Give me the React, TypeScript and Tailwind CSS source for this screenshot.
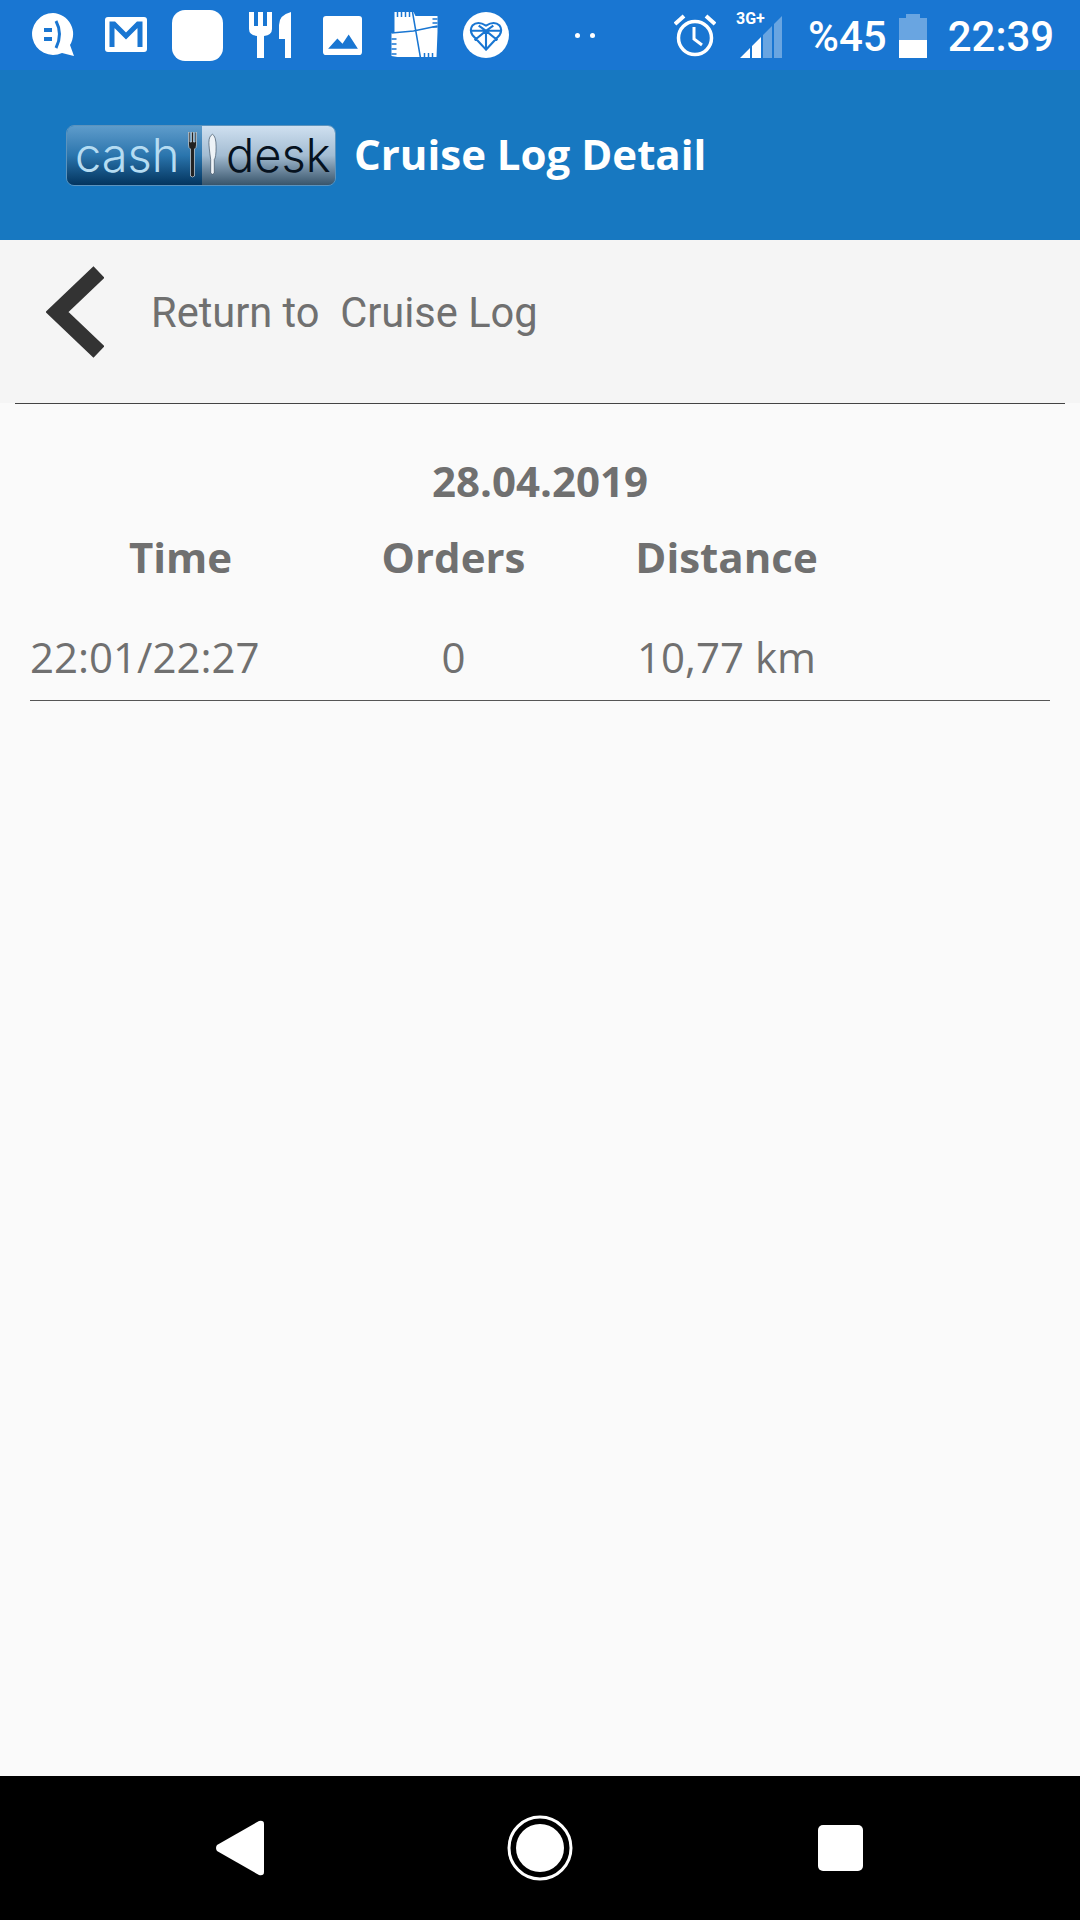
const Bubble = () => (
  <svg width="44" height="46" viewBox="0 0 44 46" className="ml-[32px]">
    <path d="M21 1a21 21 0 1 0 9 40l12 3-4-11A21 21 0 0 0 21 1z" fill="#fff" />
    <rect x="12" y="16" width="8" height="4" fill="#1976d2" />
    <rect x="12" y="25" width="8" height="4" fill="#1976d2" />
    <path d="M24 9q7 13 0 27" fill="none" stroke="#1976d2" strokeWidth="3" />
  </svg>
);

const Gmail = () => (
  <svg width="42" height="36" viewBox="0 0 42 36" className="ml-[29px]">
    <rect width="42" height="35" rx="3" fill="#fff" />
    <path d="M7 30V7h2l12 12L33 7h2v23" fill="none" stroke="#1976d2" strokeWidth="5" />
  </svg>
);

const Cutlery = () => (
  <svg width="42" height="48" viewBox="0 0 42 48" className="ml-[26px]">
    <path d="M0 1h5v14h4V1h5v14h4V1h5v17q0 6-8 7v22H8V25q-8-1-8-7z" fill="#fff" />
    <path d="M42 1v46h-6V28h-6V14Q30 4 42 1z" fill="#fff" />
  </svg>
);

const Picture = () => (
  <svg width="39" height="39" viewBox="0 0 38 38" className="ml-[32px]">
    <rect width="38" height="38" rx="3" fill="#fff" />
    <path d="M5 32l9-10 5 5 6-9 9 14z" fill="#1976d2" />
  </svg>
);

const Blanket = () => (
  <svg width="47" height="48" viewBox="0 0 46 48" className="ml-[29px]">
    <path d="M3 1h19l2 4h22v16l-1 25H6l-6-1V22h3z" fill="#fff" />
    <path d="M21 1l8 46M0 22l22-2 24-5" fill="none" stroke="#1976d2" strokeWidth="1.5" />
    <path d="M6 1v5M10 1v5M14 1v5M18 1v5M41 8h5M41 12h5M41 16h5M0 28h5M0 33h5M0 38h5M0 43h5M33 42v5M37 42v5M41 42v5" stroke="#1976d2" strokeWidth="1.5" />
  </svg>
);

const HeartCircle = () => (
  <svg width="46" height="46" viewBox="0 0 44 44" className="ml-[25px]">
    <circle cx="22" cy="22" r="22" fill="#fff" />
    <path d="M22 36L9 22q-3-5 0-9 5-5 13 0 8-5 13 0 3 4 0 9zM7 18h30M22 36V18M15 13l7 5 7-5M11 27l11-9 11 9" fill="none" stroke="#1976d2" strokeWidth="2" />
  </svg>
);

const Alarm = () => (
  <svg width="42" height="44" viewBox="0 0 42 44" className="ml-[79px] mt-[2px]">
    <circle cx="21" cy="24" r="16.5" fill="none" stroke="#fff" strokeWidth="3.5" />
    <path d="M20 13v12l8 6" fill="none" stroke="#fff" strokeWidth="3" />
    <path d="M1 10L10 2M41 10L32 2" stroke="#fff" strokeWidth="4" />
  </svg>
);

const Signal = () => (
  <div className="relative ml-[24px] mt-[2px] h-[44px] w-[42px]">
    <svg width="42" height="44" viewBox="0 0 42 44" className="absolute left-0 top-0">
      <path d="M0 44l10-10v10zM12 44V32l9-9v21z" fill="#fff" />
      <path d="M23 44V21l9-9v32zM34 44V10l8-8v42z" fill="#fff" fillOpacity="0.35" />
    </svg>
    <span className="absolute left-[-4px] top-[-4px] font-['Roboto',sans-serif] text-[16px] leading-[18px] font-bold text-white">
      3G+
    </span>
  </div>
);

const Battery = () => (
  <div className="ml-[12px] mt-[1px] flex h-[44px] w-[28px] flex-col items-center">
    <div className="h-[4px] w-[14px] bg-white/35" />
    <div className="h-[22px] w-[28px] bg-white/35" />
    <div className="h-[18px] w-[28px] bg-white" />
  </div>
);

const Logo = () => (
  <div className="flex h-[61px] w-[270px] overflow-hidden rounded-[8px] border border-[#5c93bd]">
    <div className="flex w-[135px] items-center justify-between bg-gradient-to-b from-[#5e9ccb] via-[#2a75ad] to-[#04355f] pl-[8px] pr-[4px]">
      <span className="font-['Inter',sans-serif] text-[47px] leading-[44px] font-light text-[#b5dcf2]">cash</span>
      <svg width="11" height="46" viewBox="0 0 10 46" className="shrink-0">
        <path d="M1 0h1.5v10H4V0h2v10h1.500V0H9v13q0 3-2 4v27q-2 2-4 0V17q-2-1-2-4z" fill="#222" stroke="#cfd8df" strokeWidth="0.7" />
      </svg>
    </div>
    <div className="flex flex-1 items-center bg-gradient-to-b from-[#cfe0f0] via-[#a3bcd2] to-[#39556b] pl-[6px]">
      <svg width="9" height="46" viewBox="0 0 10 46" className="mr-[9px] shrink-0">
        <path d="M5 0q4 2 4 14t-2 14v15q-2 3-4 0V28Q1 14 1 9q0-7 4-9z" fill="#eef3f7" stroke="#33465a" strokeWidth="0.7" />
      </svg>
      <span className="font-['Inter',sans-serif] text-[47px] leading-[44px] font-light text-[#06121f]">desk</span>
    </div>
  </div>
);

const App = () => {
  return (
    <div className="flex h-[1920px] w-[1080px] flex-col bg-[#fafafa]">
      {/* status bar */}
      <div className="flex h-[70px] items-center bg-[#1976d2] text-white">
        <Bubble />
        <Gmail />
        <div className="ml-[25px] h-[51px] w-[51px] rounded-[13px] bg-white" />
        <Cutlery />
        <Picture />
        <Blanket />
        <HeartCircle />
        <div className="ml-[66px] flex gap-[10px]">
          <div className="h-[5px] w-[5px] rounded-full bg-white" />
          <div className="h-[5px] w-[5px] rounded-full bg-white" />
        </div>
        <Alarm />
        <Signal />
        <span className="ml-[26px] mt-[3px] font-['Roboto',sans-serif] text-[42px] leading-[46px] font-medium">%45</span>
        <Battery />
        <span className="ml-[21px] mt-[3px] font-['Roboto',sans-serif] text-[42px] leading-[46px] font-medium">22:39</span>
      </div>

      {/* header */}
      <div className="flex h-[170px] items-center bg-[#1778c1] pl-[66px]">
        <Logo />
        <h1 className="mb-[4px] ml-[18px] font-['Open_Sans',sans-serif] text-[42px] font-bold text-white">
          Cruise Log Detail
        </h1>
      </div>

      {/* return link */}
      <div className="flex h-[163px] items-center bg-[#f5f5f5] pb-[19px] pl-[46px]">
        <svg width="58" height="92" viewBox="0 0 58 92">
          <path d="M53 6L11 46l42 40" fill="none" stroke="#333" strokeWidth="16" />
        </svg>
        <span className="ml-[47px] mt-[2px] whitespace-pre font-['Roboto',sans-serif] text-[41.6px] text-[#707070]">
          Return to  Cruise Log
        </span>
      </div>
      <div className="mx-[15px] h-px bg-[#444]" />

      {/* date */}
      <div className="mt-[52px] text-center font-['Open_Sans',sans-serif] text-[42px] leading-[50px] font-bold text-[#707070]">
        28.04.2019
      </div>

      {/* table head */}
      <div className="mt-[26px] flex pl-[44px] font-['Open_Sans',sans-serif] text-[42px] leading-[50px] font-bold text-[#707070]">
        <div className="w-[273px] text-center">Time</div>
        <div className="w-[273px] text-center">Orders</div>
        <div className="w-[273px] text-center">Distance</div>
      </div>

      {/* table row */}
      <div className="mx-[30px] mt-[50px] flex border-b border-[#555] pb-[18px] font-['Open_Sans',sans-serif] text-[42px] leading-[50px] text-[#707070]">
        <div className="w-[287px]">22:01/22:27</div>
        <div className="w-[273px] text-center">0</div>
        <div className="w-[273px] text-center">10,77 km</div>
      </div>

      {/* nav bar */}
      <div className="mt-auto flex h-[144px] items-center bg-black">
        <svg width="50" height="58" viewBox="0 0 50 58" className="ml-[215px]">
          <path d="M2 26L44 2q5-1 5 3v48q0 4-5 3L2 32q-2-3 0-6z" fill="#fff" />
        </svg>
        <svg width="66" height="66" viewBox="0 0 66 66" className="ml-[242px]">
          <circle cx="33" cy="33" r="31" fill="none" stroke="#fff" strokeWidth="3" />
          <circle cx="33" cy="33" r="24" fill="#fff" />
        </svg>
        <div className="ml-[245px] h-[46px] w-[45px] rounded-[5px] bg-white" />
      </div>
    </div>
  );
};

export default App;
